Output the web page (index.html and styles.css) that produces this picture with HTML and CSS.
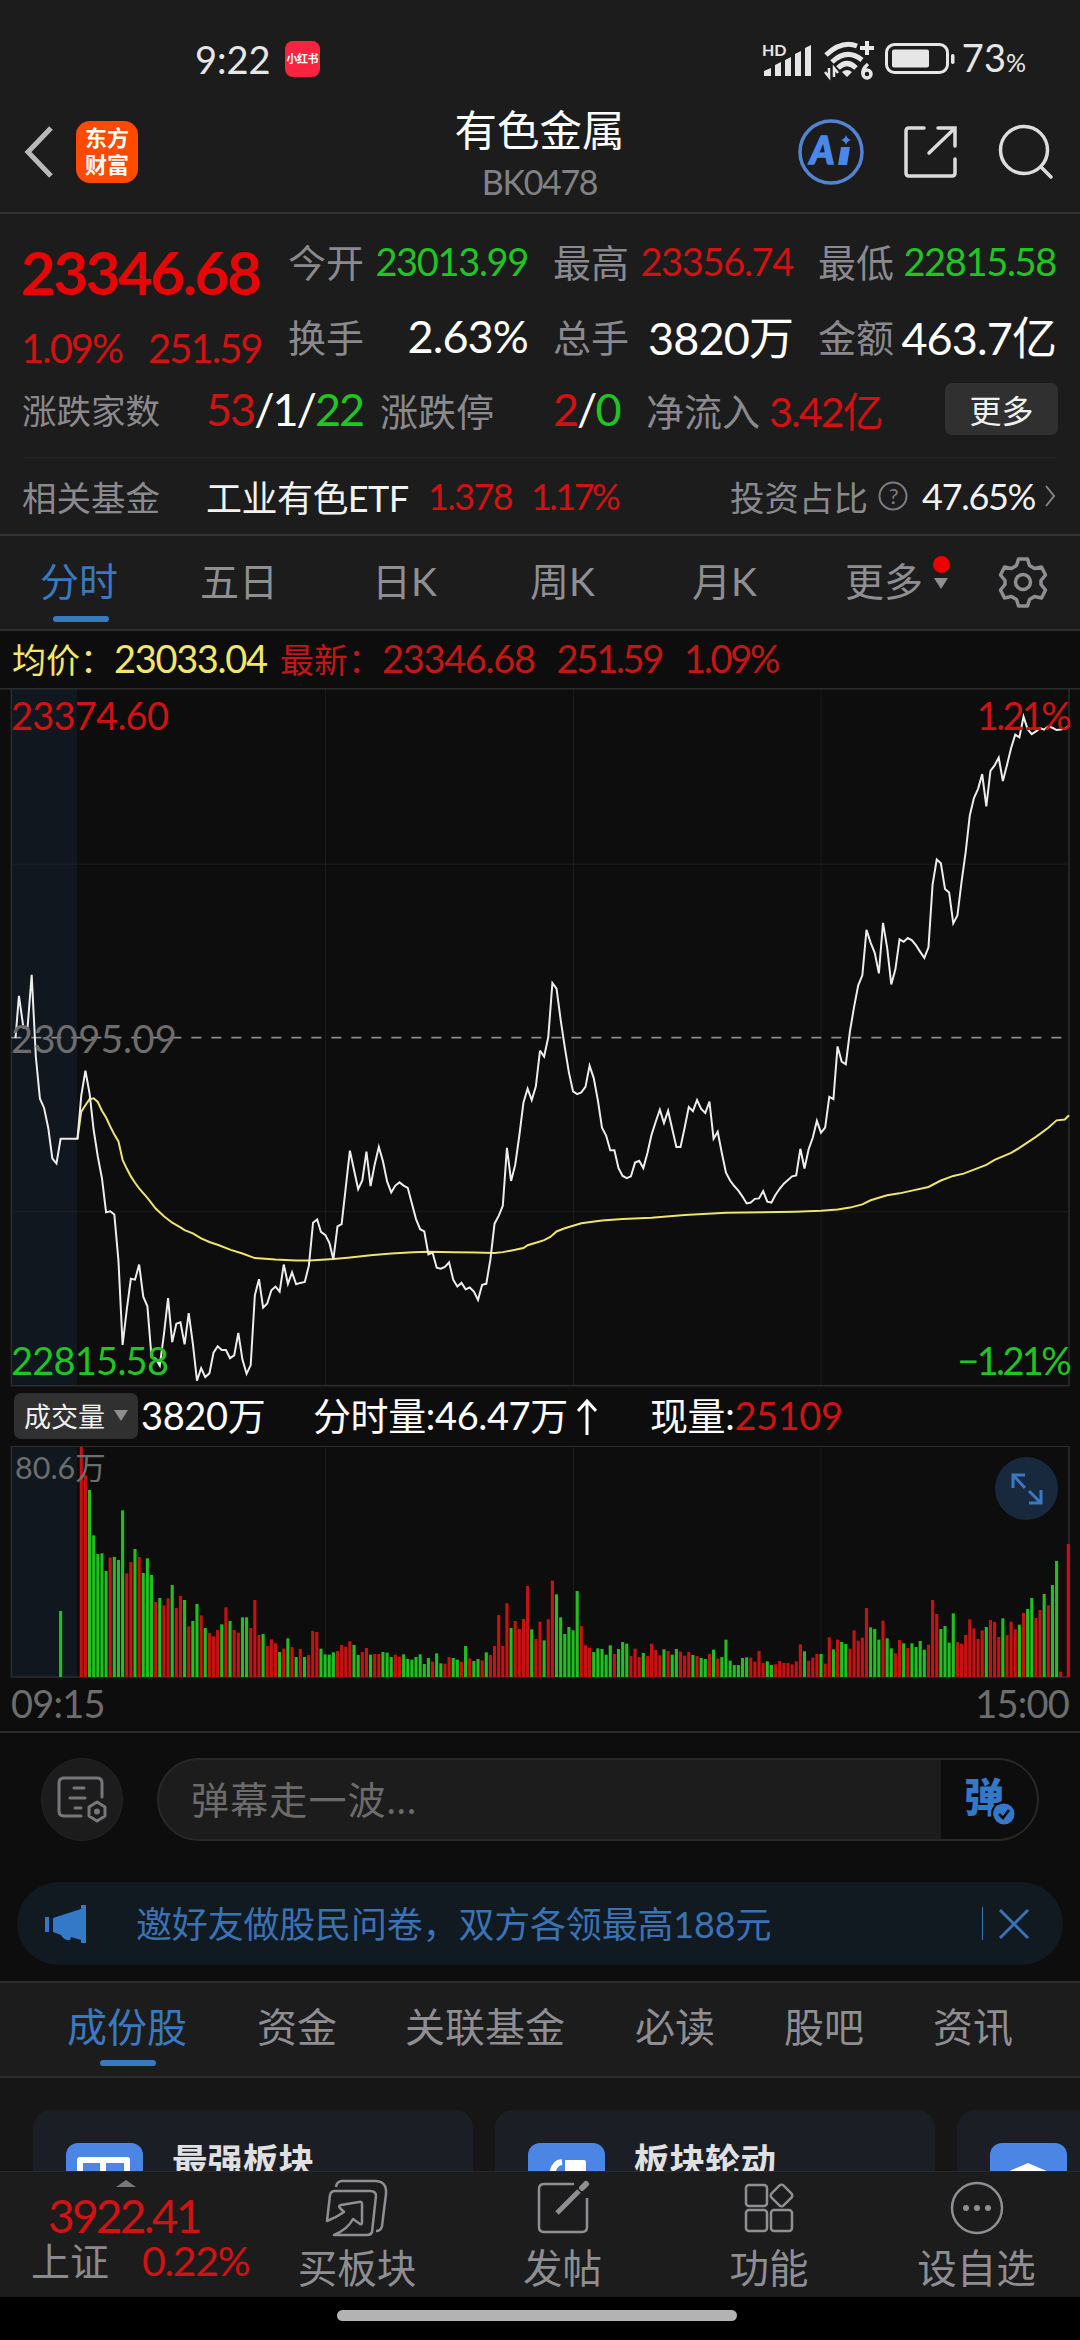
FILE: index.html
```html
<!DOCTYPE html>
<html lang="zh-CN">
<head>
    <meta charset="UTF-8">
    <meta name="viewport" content="width=device-width, initial-scale=1.0">
    <title>有色金属 BK0478</title>
    <link rel="stylesheet" href="styles.css">
</head>
<body>
    <div class="status-bar">
        <span class="clock">9:22</span>
        <span class="app-badge">小红书</span>
        <svg class="signal" width="52" height="36" viewBox="0 -2 52 36" fill="#e6e6e6">
            <text x="1" y="13" font-size="16" font-weight="700">HD</text>
            <path d="M3 33v-5l7-3v8zM14 33V22l6-3v14zM24 33V17l6-3v19zM34 33V11l6-3v25zM44 33V5l6-3v31z"/>
        </svg>
        <svg class="wifi" width="50" height="40" viewBox="0 0 50 40" fill="none" stroke="#e6e6e6" stroke-width="5">
            <path d="M2 14Q18-1 33 5M8 21Q23 7 38 19M14 27Q23 18 32 27"/>
            <path d="M18 31q5-4 10 0l-5 5z" fill="#e6e6e6" stroke="none"/>
            <path d="M43 0v14M36 7h14" stroke-width="4"/>
            <path d="M5 27v9l-4-5M10 36v-9l4 5" stroke-width="2.5"/>
            <path d="M44 23q-6 5-5 10" stroke-width="3.5"/><circle cx="43" cy="33" r="4" stroke-width="3.5"/>
        </svg>
        <svg class="battery" width="70" height="32" viewBox="0 0 70 32">
            <rect x="1.5" y="1.5" width="61" height="28" rx="8" fill="none" stroke="#e6e6e6" stroke-width="3"/>
            <rect x="7" y="6.500" width="37" height="18" rx="2" fill="#e6e6e6"/>
            <rect x="66" y="11" width="3.500" height="10" rx="1.700" fill="#e6e6e6"/>
        </svg>
        <span class="battery-text">73<small>%</small></span>
    </div>

    <header class="header">
        <svg class="back" width="30" height="52" viewBox="0 0 30 52" fill="none" stroke="#b9b9b9" stroke-width="5"><path d="M27 2L4 26l23 24"/></svg>
        <div class="brand">东方<br>财富</div>
        <div class="title">
            <h1>有色金属</h1>
            <p>BK0478</p>
        </div>
        <svg class="ai" width="66" height="66" viewBox="0 0 66 66">
            <circle cx="33" cy="33" r="31" fill="none" stroke="#5384d2" stroke-width="3.500"/>
            <text x="12" y="45" font-size="37" font-weight="900" font-style="italic" fill="#4a87ea" stroke="#4a87ea" stroke-width="1.500">A</text>
            <path d="M43 28h9l-3 18h-9zM48 16q1 4 5 5-4 1-5 5-1-4-5-5 4-1 5-5z" fill="#4a87ea"/>
        </svg>
        <svg class="share" width="54" height="54" viewBox="0 0 54 54" fill="none" stroke="#dcdcdc" stroke-width="3.500" stroke-linecap="round">
            <path d="M20 3H5q-3 0-3 3v42q0 3 3 3h43q3 0 3-3V34M34 3h17v18M50 4L25 28"/>
        </svg>
        <svg class="search" width="56" height="56" viewBox="0 0 56 56" fill="none" stroke="#dcdcdc" stroke-width="3.500" stroke-linecap="round">
            <circle cx="26" cy="26" r="23.500"/><path d="M43 43l10 10"/>
        </svg>
    </header>

    <section class="quote">
        <div class="quote-main">
            <div class="price">
                <div class="now">23346.68</div>
                <div class="change"><span>1.09%</span><span>251.59</span></div>
            </div>
            <div class="stats">
                <div><label>今开</label><b class="down">23013.99</b></div>
                <div><label>最高</label><b class="up">23356.74</b></div>
                <div><label>最低</label><b class="down">22815.58</b></div>
                <div class="big"><label>换手</label><b>2.63%</b></div>
                <div class="big"><label>总手</label><b>3820万</b></div>
                <div class="big"><label>金额</label><b>463.7亿</b></div>
            </div>
        </div>
        <div class="breadth">
            <label class="small">涨跌家数</label>
            <b><i class="up">53</i>/1/<i class="down">22</i></b>
            <label>涨跌停</label>
            <b><i class="up">2</i>/<i class="down">0</i></b>
            <label>净流入</label>
            <b class="up inflow">3.42亿</b>
            <button class="more">更多</button>
        </div>
        <div class="fund">
            <label>相关基金</label>
            <span class="fund-name">工业有色ETF</span>
            <span class="up fund-price">1.378</span>
            <span class="up fund-rate">1.17%</span>
            <label class="ratio">投资占比</label>
            <svg class="help" width="32" height="32" viewBox="0 0 32 32"><circle cx="16" cy="16" r="13.500" fill="none" stroke="#7c7c80" stroke-width="2"/><text x="16" y="24" text-anchor="middle" font-size="22" fill="#7c7c80">?</text></svg>
            <span>47.65%</span>
            <svg width="12" height="24" viewBox="0 0 12 24" fill="none" stroke="#85858a" stroke-width="2"><path d="M2 2l8 10-8 10"/></svg>
        </div>
    </section>

    <nav class="periods">
        <span class="active">分时</span>
        <span>五日</span>
        <span>日K</span>
        <span>周K</span>
        <span>月K</span>
        <span class="more-tab">更多<i class="dot"></i><i class="caret"></i></span>
        <svg width="52" height="52" viewBox="0 0 52 52" fill="none" stroke="#8e8e93" stroke-width="3.500" stroke-linejoin="round">
            <path d="M21.500 3h9l2 6.500 5 3 7-1.500 4 8-4.500 5.500v4l4.500 5.500-4 8-7-1.500-5 3-2 6.500h-9l-2-6.500-5-3-7 1.500-4-8L8 28.500v-4L3.500 19l4-8 7 1.500 5-3z"/>
            <circle cx="26" cy="26" r="7.500"/>
        </svg>
    </nav>

    <div class="legend">
        <span class="avg">均价：<em>23033.04</em></span>
        <span class="last">最新：<em>23346.68</em><em>251.59</em><em>1.09%</em></span>
    </div>

    <div class="chart">
        <svg class="plot" viewBox="0 17.400 3136 1524.500" preserveAspectRatio="none" fill="none">
            <rect x="34" y="18" width="190" height="1519" fill="#10171e"/>
            <g class="grid">
                <path d="M945 18V1537M1665 18V1537M2384 18V1537M34 401H3104M34 1158H3104"/>
            </g>
            <path class="frame" d="M0 19H3136M33 18V1537H3104V18"/>
            <path class="mid" d="M33 779H3104"/>
            <polyline class="avg-line" points="225,999 236,940 248,926 260,913 272,911 284,919 296,938 308,953 320,972 332,990 344,1005 356,1045 368,1064 380,1081 392,1095 404,1107 428,1128 452,1151 476,1168 500,1182 524,1192 536,1198 560,1205 584,1216 608,1224 632,1230 670,1241 704,1249 740,1259 800,1262 860,1264 900,1264 968,1261 1010,1258 1076,1253 1136,1249 1200,1246 1244,1245 1316,1246 1380,1247 1436,1248 1460,1246 1496,1241 1520,1237 1532,1231 1568,1223"/>
            <polyline class="price-line" points="45,780 55,688 68,757 80,757 92,642 104,820 116,912 128,932 140,975 152,1042 164,1053 176,999 225,999 236,905 248,851 260,900 272,980 284,1038 296,1085 308,1159 320,1157 332,1164 344,1265 356,1448 368,1372 380,1304 392,1306 404,1273 416,1343 428,1364 440,1475 452,1478 464,1493 476,1425 488,1346 500,1442 512,1402 524,1399 536,1447 548,1379 560,1445 572,1526 584,1499 596,1518 608,1510 620,1465 632,1451 644,1459 656,1459 668,1477 680,1471 692,1422 704,1480 716,1511 728,1492 740,1340 752,1305 764,1367 776,1358 788,1329 800,1321 812,1332 824,1273 836,1315 848,1290 860,1316 872,1313 885,1311 897,1275 909,1182 921,1175 932,1202 945,1209 957,1227 968,1262 980,1190 992,1185 1004,1105 1016,1025 1028,1067 1040,1109 1052,1090 1064,1027 1076,1102 1088,1055 1100,1017 1112,1048 1124,1092 1136,1116 1148,1101 1160,1094 1172,1101 1184,1106 1196,1140 1208,1174 1220,1196 1232,1201 1244,1251 1256,1247 1268,1280 1280,1282 1292,1278 1304,1268 1316,1306 1328,1321 1340,1313 1352,1327 1364,1323 1376,1332 1388,1350 1400,1317 1412,1315 1424,1262 1436,1184 1448,1167 1460,1145 1472,1019 1484,1091 1496,1056 1508,992 1520,920 1532,890 1544,915 1556,885 1568,807"/>
            <!-- 下半段 -->
            <g transform="translate(1568)">
                <polyline class="avg-line" points="0,1223 12,1220 30,1213 48,1201 72,1194 120,1183 180,1177 240,1174 324,1171 420,1165 540,1160 740,1158 816,1156 864,1153 900,1149 936,1142 960,1133 1008,1122 1044,1118 1080,1112 1128,1104 1164,1090 1200,1080 1230,1075 1296,1056 1320,1045 1368,1030 1392,1019 1440,995 1476,975 1500,959 1524,957 1536,948"/>
                <polyline class="price-line" points="0,807 12,820 24,778 36,660 48,672 60,740 72,800 84,855 96,896 108,902 120,898 132,886 144,840 156,867 168,915 180,975 192,992 204,1024 216,1024 228,1063 240,1080 252,1085 264,1081 276,1051 288,1047 300,1063 312,1030 324,990 336,962 348,936 360,965 372,938 384,978 396,1017 408,1017 420,975 432,930 444,939 456,915 468,934 480,943 492,918 504,999 516,984 528,1030 540,1073 552,1090 564,1102 576,1112 588,1125 600,1140 612,1138 624,1130 636,1129 648,1113 660,1136 672,1138 684,1121 696,1108 708,1097 732,1081 744,1079 756,1021 768,1064 780,1022 792,997 804,960 816,986 828,975 840,908 852,913 864,798 876,831 888,837 900,765 912,712 924,665 936,643 948,544 960,572 972,594 984,639 996,529 1008,583 1020,663 1032,630 1044,565 1056,570 1068,562 1080,567 1092,578 1104,592 1116,605 1128,582 1140,445 1152,391 1164,399 1176,455 1188,463 1200,530 1212,513 1224,440 1236,375 1248,295 1260,257 1272,237 1284,205 1296,275 1308,198 1320,186 1332,169 1344,220 1356,185 1368,148 1380,119 1392,125 1404,80 1416,107 1428,118 1440,112 1452,105 1464,108 1476,101 1488,104 1500,109 1512,108 1524,106 1536,99"/>
            </g>
        </svg>
        <span class="tag top-left">23374.60</span>
        <span class="tag top-right">1.21%</span>
        <span class="tag mid-left">23095.09</span>
        <span class="tag bottom-left">22815.58</span>
        <span class="tag bottom-right">−1.21%</span>
    </div>

    <div class="volume-info">
        <button class="indicator">成交量<i></i></button>
        <span class="total">3820万</span>
        <span class="minute">分时量:46.47万<svg width="20" height="38" viewBox="0 0 20 38" fill="none" stroke="#fff" stroke-width="3"><path d="M10 37V3M1 13l9-10 9 10"/></svg></span>
        <span>现量:<i class="up">25109</i></span>
    </div>

    <div class="volume">
        <svg class="bars" viewBox="0 0 3136 696" preserveAspectRatio="none" fill="none">
            <rect x="34" y="1" width="190" height="692" fill="#10171e"/>
            <g class="grid"><path d="M945 1V692M1665 1V692M2384 1V692"/></g>
            <path class="frame" d="M33 693V1H3104V693z"/>
            <g id="bars"></g>
        </svg>
        <span class="max">80.6万</span>
        <span class="expand">
            <svg width="32" height="34" viewBox="0 0 32 34" fill="none" stroke="#3a78bf" stroke-width="3"><path d="M2 16V3h12M3 4l11 12M18 31h12V18M29 30L18 19"/></svg>
        </span>
    </div>
    <div class="time-axis"><span>09:15</span><span>15:00</span></div>

    <div class="danmu">
        <div class="danmu-set">
            <svg width="50" height="50" viewBox="0 0 50 50" fill="none" stroke="#77777a" stroke-width="3" stroke-linecap="round" stroke-linejoin="round">
                <path d="M24 41H7q-5 0-5-5V8q0-5 5-5h33q5 0 5 5v14M17 13h10M13 23h15M18 33h6M40 27l8 5v9l-8 5-8-5v-9z"/><circle cx="40" cy="36.500" r="1.500" fill="#77777a"/>
            </svg>
        </div>
        <div class="danmu-input">
            <span>弹幕走一波...</span>
            <div class="danmu-toggle">弹<svg width="22" height="22" viewBox="0 0 22 22"><circle cx="11" cy="11" r="10.500" fill="#3478c8"/><path d="M6 11l4 4 6-8" fill="none" stroke="#0d0d0d" stroke-width="2.500"/></svg></div>
        </div>
    </div>

    <div class="banner">
        <svg width="44" height="38" viewBox="0 0 44 38" fill="#3478c8"><path d="M1 12h4v15H1zM9 13l28-9V0h5v38h-5v-3l-10-3-1 3q-6 1-9-5l-8-3z"/></svg>
        <p>邀好友做股民问卷，双方各领最高188元</p>
        <i class="sep"></i>
        <svg class="close" width="32" height="32" viewBox="0 0 32 32" fill="none" stroke="#3a72b4" stroke-width="3"><path d="M2 2l28 28M30 2L2 30"/></svg>
    </div>

    <nav class="sections">
        <span class="active">成份股</span>
        <span>资金</span>
        <span>关联基金</span>
        <span>必读</span>
        <span>股吧</span>
        <span>资讯</span>
    </nav>

    <div class="cards">
        <div class="card">
            <svg width="77" height="77" viewBox="0 0 77 77"><rect width="77" height="77" rx="12" fill="#4c86e4"/><path d="M11 62V17q0-3 3-3h47q3 0 3 3v45z" fill="#fff"/><path d="M17 20h17v12H17zM40 20h18v12H40z" fill="#4c86e4"/></svg>
            <h3>最强板块</h3>
        </div>
        <div class="card">
            <svg width="77" height="77" viewBox="0 0 77 77"><rect width="77" height="77" rx="12" fill="#4c86e4"/><path d="M37 17h19q2 0 2 2v22H37z" fill="#fff"/><path d="M24 36q0-16 10-17" fill="none" stroke="#fff" stroke-width="6"/></svg>
            <h3>板块轮动</h3>
        </div>
        <div class="card">
            <svg width="77" height="77" viewBox="0 0 77 77"><rect width="77" height="77" rx="12" fill="#4c86e4"/><path d="M38 20l28 12-28 16-28-16z" fill="#fff"/></svg>
        </div>
    </div>

    <footer class="toolbar">
        <div class="index">
            <i class="arrow-up"></i>
            <div class="index-value">3922.41</div>
            <div class="index-row"><label>上证</label><span>0.22%</span></div>
        </div>
        <div class="tool">
            <svg width="66" height="60" viewBox="0 0 66 60" fill="none" stroke="#8e8e93" stroke-width="2.500" stroke-linejoin="round">
                <path d="M12 9q1-6 6-6h33q12 0 11 13l-4 32q-1 5-6 5"/>
                <path d="M3 43L6 17q1-4 5-4h35q6 0 6 5l-4 36q-1 3-5 3H10q14-6 19-16l7 5q2 1 2-2V26q0-3-3-2l-18 3q-3 1-1 3l4 4q-7 5-17 9z"/>
            </svg>
            <span>买板块</span>
        </div>
        <div class="tool">
            <svg width="54" height="60" viewBox="0 0 54 60" fill="none" stroke="#8e8e93" stroke-width="2.500">
                <path d="M38 6H8Q3 6 3 11v38q0 5 5 5h38q5 0 5-5V20"/>
                <path d="M21 35L43 13" stroke-width="5"/><path d="M46 10l4-4" stroke-width="6" stroke-linecap="round"/>
            </svg>
            <span>发帖</span>
        </div>
        <div class="tool">
            <svg width="50" height="60" viewBox="0 0 50 60" fill="none" stroke="#8e8e93" stroke-width="2.500" stroke-linejoin="round">
                <rect x="2" y="7" width="21" height="21" rx="3"/><rect x="2" y="32" width="21" height="21" rx="3"/><rect x="27" y="32" width="21" height="21" rx="3"/>
                <rect x="29" y="9" width="17" height="17" rx="3" transform="rotate(45 37.500 17.500)"/>
            </svg>
            <span>功能</span>
        </div>
        <div class="tool">
            <svg width="54" height="60" viewBox="0 0 54 60" fill="#8e8e93">
                <circle cx="27" cy="30" r="25" fill="none" stroke="#8e8e93" stroke-width="2.500"/>
                <circle cx="16" cy="30" r="3"/><circle cx="27" cy="30" r="3"/><circle cx="38" cy="30" r="3"/>
            </svg>
            <span>设自选</span>
        </div>
    </footer>
    <div class="home-bar"><i></i></div>

    <script>
        // 每分钟成交量，r 为涨 g 为跌
        const volumes = 'r690 r605 g561 g425 g369 g371 g318 r358 g360 g351 g500 r311 r345 g384 r360 g312 g356 g306 r225 g237 r215 r236 g276 r207 r243 g231 r152 g168 g219 r185 g147 r132 r122 r141 g158 r209 g168 r141 r133 g179 g179 r147 r231 r126 g129 r93 r113 r101 g75 r85 g116 r90 g60 r84 g60 r66 r138 r135 g85 g68 g67 g74 r78 r96 r91 r107 g96 g66 r75 r87 g67 r69 r69 g75 g73 g60 r67 r61 g68 g54 g52 g60 g68 g39 g57 r46 g71 g41 r40 r60 g57 g52 r46 g93 r56 g48 g54 r50 g74 r66 r93 r186 r93 r221 g147 r168 r144 r174 r273 g143 r114 r166 g110 r173 r289 g248 g179 g129 g150 g140 g258 r153 r95 r88 g75 g86 g84 g67 g95 r69 g84 g105 g100 r63 r85 r60 g72 r63 r100 r81 r65 g83 r78 g67 g84 r76 r64 r75 g66 r63 g57 g54 r69 g82 r55 g60 g112 g49 g36 g36 g57 g59 r58 r46 r78 r42 g47 g36 r38 r48 r42 r42 r38 r47 r98 g77 r49 r58 r69 g69 r40 r119 g83 r112 g105 g99 r85 r140 r109 r118 r207 g149 g144 g112 r169 g116 g86 r71 r111 g101 r87 g101 g90 g108 g82 r97 r231 r189 g144 g153 g103 g191 r105 r100 r126 r173 r146 r114 r140 g150 r171 r165 r120 g176 r126 r166 r143 g157 r192 g204 g237 r177 r201 g249 r215 g276 g348 r16'.split(' ');
        const barGroup = document.getElementById('bars');

        function addBar(x, height, type) {
            const bar = document.createElementNS('http://www.w3.org/2000/svg', 'rect');
            bar.setAttribute('x', x - 4.5);
            bar.setAttribute('y', 693 - height);
            bar.setAttribute('width', 9);
            bar.setAttribute('height', height);
            bar.setAttribute('class', type === 'r' ? 'bar-up' : 'bar-down');
            barGroup.appendChild(bar);
        }

        addBar(176, 198, 'g'); // 集合竞价
        volumes.forEach((item, i) => addBar(236 + i * 12, Number(item.slice(1)), item[0]));
        addBar(3102, 399, 'r'); // 收盘
    </script>
</body>
</html>
```
FILE: styles.css
```css
* {
    box-sizing: border-box;
}
body {
    margin: 0;
    width: 1080px;
    height: 2340px;
    overflow: hidden;
    background: #0d0d0d;
    color: #f2f2f2;
    font-family: Lato, "Noto Sans CJK SC", sans-serif;
    font-size: 38px;
    letter-spacing: -0.035em;
    display: flex;
    flex-direction: column;
}
body > * {
    flex-shrink: 0;
}
svg {
    display: block;
    flex-shrink: 0;
}
b, i, em {
    font-weight: 400;
    font-style: normal;
}
label {
    color: #8a8a8e;
    letter-spacing: 0;
}
button {
    border: none;
    color: #f0f0f0;
    background: #303030;
    font-family: inherit;
    padding: 0;
}
h1, h3, p {
    margin: 0;
}
.up {
    color: #d01212;
}
.down {
    color: #1fc522;
}

/* 状态栏 */
.status-bar {
    height: 100px;
    padding: 18px 54px 0 195px;
    display: flex;
    align-items: center;
    background: #1c1c1c;
    color: #e6e6e6;
    line-height: 40px;
}
.clock {
    width: 92px;
    letter-spacing: 0;
}
.app-badge {
    width: 36px;
    height: 36px;
    border-radius: 8px;
    background: #fb2440;
    color: #fff;
    font-size: 11px;
    font-weight: 700;
    line-height: 36px;
    text-align: center;
    letter-spacing: -0.5px;
}
.signal {
    margin-left: 441px;
    letter-spacing: 0;
}
.wifi {
    margin: 4px 0 0 11px;
}
.battery {
    margin-left: 11px;
}
.battery-text {
    margin-left: 7px;
    letter-spacing: 0;
}
.battery-text small {
    font-size: 25px;
}

/* 标题栏 */
.header {
    height: 114px;
    display: flex;
    align-items: center;
    background: #1c1c1c;
    border-bottom: 2px solid #333;
    padding: 0 26px 8px 24px;
}
.back {
    margin-right: 22px;
}
.brand {
    width: 62px;
    height: 62px;
    border-radius: 14px;
    background: #ff4a00;
    color: #fff;
    font-size: 22px;
    font-weight: 700;
    line-height: 27px;
    padding-top: 3px;
    text-align: center;
    letter-spacing: 0;
}
.title {
    flex: 1;
    text-align: center;
    padding: 6px 0 0 143px;
}
.title h1 {
    font-size: 42.5px;
    font-weight: 400;
    line-height: 54px;
    letter-spacing: 0;
    color: #fff;
}
.title p {
    font-size: 34px;
    line-height: 50px;
    color: #828286;
}
.ai {
    margin-right: 40px;
}
.share {
    margin-right: 40px;
}

/* 行情 */
.quote {
    height: 322px;
    background: #1c1c1c;
    border-bottom: 2px solid #333;
    padding: 9px 24px 0;
}
.quote-main {
    display: flex;
    height: 150px;
}
.price {
    width: 265px;
    padding-top: 10px;
    color: #cf1212;
}
.now {
    margin-left: -3px;
    font-size: 60px;
    font-weight: 700;
    line-height: 78px;
    color: #e60606;
    letter-spacing: -0.04em;
}
.change {
    display: flex;
    gap: 26px;
    margin-left: -3px;
    font-size: 40px;
    line-height: 74px;
    letter-spacing: -0.05em;
}
.stats {
    flex: 1;
    display: grid;
    grid-template-columns: 240px 240px 238px;
    grid-template-rows: 75px 75px;
    column-gap: 25px;
}
.stats div {
    display: flex;
    justify-content: space-between;
    align-items: center;
    white-space: nowrap;
}
.stats .big b {
    font-size: 45px;
    letter-spacing: -0.02em;
    color: #fff;
}
.breadth {
    display: grid;
    grid-template-columns: 182px 174px 173px 93px 123px 176px 113px;
    align-items: center;
    height: 72px;
}
.breadth b {
    font-size: 45px;
    letter-spacing: -0.045em;
    color: #fff;
    white-space: nowrap;
}
.breadth b.inflow {
    font-size: 41px;
    color: #d01212;
}
.breadth .small {
    font-size: 34.5px;
    margin-left: -2px;
}
.breadth b .up,
.breadth b .down {
    font-size: inherit;
}
.more {
    height: 52px;
    border-radius: 7px;
    font-size: 32px;
    letter-spacing: 0;
}
.fund {
    height: 76px;
    margin-top: 12px;
    border-top: 2px solid #212121;
    display: flex;
    align-items: center;
    font-size: 36px;
}
.fund label {
    font-size: 34.5px;
    width: 184px;
    margin-left: -2px;
}
.fund-name {
    width: 222px;
    font-size: 36px;
    letter-spacing: -0.015em;
    white-space: nowrap;
}
.fund-price {
    width: 103px;
    letter-spacing: -0.045em;
}
.fund-rate {
    letter-spacing: -0.07em;
}
.fund .ratio {
    width: 138px;
    margin-left: auto;
}
.help {
    margin: 0 13px 0 9px;
}
.fund > svg:last-child {
    margin-left: 9px;
}

/* 周期 */
.periods {
    height: 95px;
    background: #1c1c1c;
    border-bottom: 2px solid #2d2d2d;
    color: #8e8e93;
    font-size: 39px;
    line-height: 48px;
    letter-spacing: 0;
    display: grid;
    grid-template-columns: 160px 172px 158px 162px 153px 152px auto;
    align-items: center;
    padding: 0 0 4px 40px;
}
.periods svg {
    margin-top: 2px;
}
.periods .active,
.sections .active {
    color: #3a78bf;
    position: relative;
}
.periods .active::after,
.sections .active::after {
    content: "";
    position: absolute;
    left: 13px;
    bottom: -17px;
    width: 56px;
    height: 6px;
    border-radius: 3px;
    background: #3a78bf;
}
.more-tab {
    position: relative;
}
.dot {
    position: absolute;
    left: 88px;
    top: -1px;
    width: 17px;
    height: 17px;
    border-radius: 50%;
    background: #ee0000;
}
.caret {
    position: absolute;
    left: 89px;
    top: 21px;
    border: 7px solid transparent;
    border-top: 11px solid #8e8e93;
    border-bottom: 0;
}

/* 分时图 */
.legend {
    height: 57px;
    display: flex;
    align-items: center;
    padding: 0 0 2px 12px;
    font-size: 34px;
    letter-spacing: 0;
    white-space: nowrap;
}
.legend em {
    font-size: 38px;
    letter-spacing: -0.035em;
}
.avg {
    color: #f3e76b;
    width: 268px;
}
.last {
    color: #c41616;
}
.last em + em {
    margin-left: 22px;
    letter-spacing: -0.06em;
}
.chart {
    position: relative;
    height: 700px;
}
.plot {
    width: 1080px;
    height: 700px;
}
.plot path,
.plot polyline,
.bars path {
    vector-effect: non-scaling-stroke;
}
.grid {
    stroke: #2b2b2b;
    stroke-width: 1;
    stroke-dasharray: 1 1;
}
.frame {
    stroke: #2c2c2c;
    stroke-width: 1.5;
}
.mid {
    stroke: #8c8c8c;
    stroke-width: 1.8;
    stroke-dasharray: 10 10;
}
.avg-line {
    stroke: #efe46c;
    stroke-width: 2;
}
.price-line {
    stroke: #ededed;
    stroke-width: 2;
}
.tag {
    position: absolute;
    font-size: 38px;
    line-height: 40px;
    letter-spacing: -0.02em;
    color: #d01212;
}
.top-left {
    left: 11px;
    top: 7px;
}
.top-right {
    right: 11px;
    top: 7px;
    letter-spacing: -0.07em;
}
.mid-left {
    left: 11px;
    top: 330px;
    letter-spacing: 0.01em;
    color: #6d6d6d;
}
.bottom-left {
    left: 11px;
    bottom: 8px;
    color: #1fc522;
}
.bottom-right {
    right: 11px;
    bottom: 8px;
    letter-spacing: -0.07em;
    color: #1fc522;
}

/* 成交量 */
.volume-info {
    height: 58px;
    padding: 0 0 2px 14px;
    display: flex;
    align-items: center;
    color: #fff;
    line-height: 48px;
    white-space: nowrap;
    letter-spacing: -0.01em;
}
.volume-info > span {
    padding-bottom: 3px;
}
.indicator {
    width: 124px;
    height: 46px;
    border-radius: 7px;
    font-size: 27px;
    display: flex;
    align-items: center;
    padding: 0 0 2px 10px;
    letter-spacing: 0;
}
.indicator i {
    margin-left: 9px;
    border: 7px solid transparent;
    border-top: 11px solid #8e8e93;
    border-bottom: 0;
}
.total {
    width: 172px;
    margin-left: 3px;
}
.minute {
    width: 337px;
    display: flex;
    align-items: center;
    gap: 9px;
}
.minute svg {
    margin-top: 4px;
}
.volume {
    position: relative;
    height: 232px;
}
.bars {
    width: 1080px;
    height: 232px;
}
.bar-up {
    fill: #c81212;
}
.bar-down {
    fill: #20c022;
}
.max {
    position: absolute;
    left: 15px;
    top: 1px;
    font-size: 30.5px;
    line-height: 40px;
    letter-spacing: 0;
    color: #6d6d6d;
}
.expand {
    position: absolute;
    left: 995px;
    top: 11px;
    width: 63px;
    height: 63px;
    border-radius: 50%;
    background: #18293e;
    display: flex;
    align-items: center;
    justify-content: center;
}
.time-axis {
    height: 55px;
    padding: 0 11px 3px;
    display: flex;
    justify-content: space-between;
    align-items: center;
    color: #6d6d6d;
    border-bottom: 2px solid #2c2c2c;
    letter-spacing: -0.02em;
}

/* 弹幕 */
.danmu {
    height: 149px;
    padding: 25px 41px 0 41px;
    display: flex;
    gap: 34px;
}
.danmu-set {
    width: 82px;
    height: 83px;
    border-radius: 50%;
    background: #1c1c1c;
    border: 1px solid #242424;
    display: flex;
    align-items: center;
    justify-content: center;
}
.danmu-input {
    flex: 1;
    height: 83px;
    border-radius: 42px;
    border: 2px solid #282828;
    background: #1c1c1c;
    overflow: hidden;
    display: flex;
    align-items: center;
    justify-content: space-between;
    padding-left: 32px;
    color: #6b6b6b;
    letter-spacing: 0.03em;
}
.danmu-input > span {
    padding-bottom: 4px;
}
.danmu-toggle {
    position: relative;
    width: 96px;
    height: 83px;
    background: #0d0d0d;
    color: #3478c8;
    font-size: 40px;
    font-weight: 900;
    line-height: 78px;
    padding-left: 23px;
}
.danmu-toggle svg {
    position: absolute;
    left: 52px;
    top: 45px;
    border-radius: 50%;
    box-shadow: 0 0 0 2px #0d0d0d;
}
.banner {
    height: 83px;
    margin: 0 17px 16px 17px;
    padding: 0 33px 0 27px;
    border-radius: 42px;
    background: #111921;
    color: #3a72b4;
    display: flex;
    align-items: center;
}
.banner p {
    flex: 1;
    margin-left: 48px;
    padding-bottom: 3px;
    font-size: 36px;
    letter-spacing: -0.005em;
}
.sep {
    width: 1px;
    height: 33px;
    background: #3a72b4;
    margin-right: 15px;
}

/* 栏目 */
.sections {
    height: 97px;
    background: #1c1c1c;
    border-top: 2px solid #2c2c2c;
    border-bottom: 2px solid #2c2c2c;
    color: #8e8e93;
    font-size: 40px;
    line-height: 48px;
    letter-spacing: 0;
    display: grid;
    grid-template-columns: 190px 148px 230px 149px 149px auto;
    align-items: center;
    padding: 0 0 5px 67px;
}
.sections .active::after {
    left: 33px;
    bottom: -15px;
}
.cards {
    height: 93px;
    padding: 32px 0 0 33px;
    background: #161616;
    overflow: hidden;
    display: flex;
    gap: 22px;
}
.card {
    flex: 0 0 440px;
    height: 140px;
    border-radius: 18px;
    background: #1b1e25;
    padding: 33px;
    display: flex;
    gap: 29px;
}
.card h3 {
    font-size: 35.5px;
    line-height: 35px;
    letter-spacing: 0;
    color: #e0e0e0;
}

/* 底部工具栏 */
.toolbar {
    height: 126px;
    background: #1c1c1c;
    border-top: 1px solid #2a2a2a;
    display: grid;
    grid-template-columns: 254px 206px 205px 208px 207px;
    color: #8e8e93;
}
.index {
    color: #d01212;
    padding: 8px 0 0 31px;
}
.arrow-up {
    display: block;
    width: 20px;
    margin-left: 85px;
    border: 10px solid transparent;
    border-bottom: 7px solid #77777c;
    border-top: 0;
}
.index-value {
    font-size: 46px;
    line-height: 48px;
    margin: 5px 0 0 17px;
    letter-spacing: -0.06em;
}
.index-row {
    display: flex;
    align-items: center;
    gap: 33px;
    font-size: 41px;
    line-height: 42px;
    white-space: nowrap;
}
.index-row label {
    font-size: 39px;
}
.tool {
    display: flex;
    flex-direction: column;
    align-items: center;
    padding-top: 6px;
}
.tool span {
    font-size: 39.5px;
    line-height: 60px;
    letter-spacing: 0;
}
.home-bar {
    flex: 1;
    background: #000;
    padding: 13px 0 0 337px;
}
.home-bar i {
    display: block;
    width: 400px;
    height: 11px;
    border-radius: 6px;
    background: #b3b3b3;
}
```
